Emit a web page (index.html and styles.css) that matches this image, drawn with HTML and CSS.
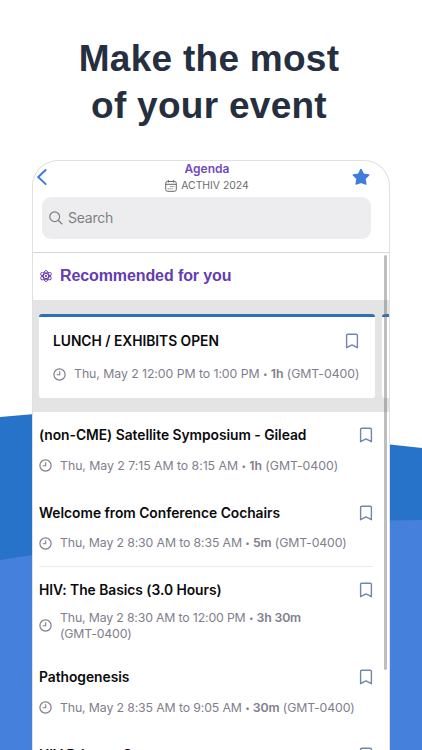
FILE: index.html
```html
<!DOCTYPE html>
<html lang="en">
<head>
  <meta charset="UTF-8">
  <meta name="viewport" content="width=device-width, initial-scale=1.0">
  <title>Agenda</title>
  <link rel="stylesheet" href="styles.css">
</head>
<body>
  <svg class="backdrop" viewBox="0 0 422 750">
    <path d="M0 417 L32 414.3 C160 404 270 424 390 444.5 L422 448 V750 H0 Z" fill="#2673c9"/>
    <path d="M0 560 L32 555 C150 535 270 521 422 520 V750 H0 Z" fill="#4480dc"/>
  </svg>

  <svg class="symbols">
    <symbol id="bookmark" viewBox="0 0 14 16">
      <path d="M2.8 1.2 H11.2 Q12.4 1.2 12.4 2.4 V14.7 L7 11.9 L1.6 14.7 V2.4 Q1.6 1.2 2.8 1.2 Z" fill="none" stroke="#7187a6" stroke-width="1.4" stroke-linejoin="round"/>
    </symbol>
    <symbol id="clock" viewBox="0 0 13 13">
      <circle cx="6.5" cy="6.5" r="5.6" fill="none" stroke="#7f7e8c" stroke-width="1.2"/>
      <path d="M6.7 3.2 V6.7 H3.7" fill="none" stroke="#7f7e8c" stroke-width="1.1"/>
    </symbol>
  </svg>

  <h1 class="headline">Make the most<br>of your event</h1>

  <div class="phone">
    <div class="nav-bar">
      <svg class="back" viewBox="0 0 12 18"><path d="M10.2 1.4 L2.2 9 L10.2 16.6" fill="none" stroke="#3f7ddb" stroke-width="2"/></svg>
      <div class="nav-title">
        <div class="nav-name">Agenda</div>
        <div class="nav-event">
          <svg class="calendar" viewBox="0 0 12 12">
            <rect x="0.7" y="1.5" width="10.6" height="9.8" rx="1.8" fill="none" stroke="#666" stroke-width="1"/>
            <path d="M0.7 4.3 H11.3 M3.3 0 V2.6 M8.7 0 V2.6" stroke="#666" stroke-width="1"/>
            <path d="M5.4 6.5 H9.6 M2.6 8.8 H7.6" stroke="#666" stroke-width="1" stroke-dasharray="1.1 0.9"/>
          </svg>
          <span>ACTHIV 2024</span>
        </div>
      </div>
      <svg class="star" viewBox="0 0 18 18"><path d="M9 1.4 L11.4 6.1 L16.7 6.9 L12.9 10.7 L13.9 16.1 L9 14.3 L4.1 16.1 L5.1 10.7 L1.3 6.9 L6.6 6.1 Z" fill="#3f7ddb" stroke="#3f7ddb" stroke-width="1.4" stroke-linejoin="round"/></svg>
    </div>

    <div class="search">
      <svg class="search-icon" viewBox="0 0 14 14"><circle cx="5.7" cy="5.7" r="4.9" fill="none" stroke="#7f7f84" stroke-width="1.2"/><path d="M9.2 9.2 L13.3 13.3" stroke="#7f7f84" stroke-width="1.3"/></svg>
      <span>Search</span>
    </div>

    <div class="section-head">
      <svg class="atom" viewBox="0 0 12 12" fill="none" stroke="#643cb0" stroke-width="0.9">
        <ellipse cx="6" cy="6" rx="2.6" ry="5.5"/>
        <ellipse cx="6" cy="6" rx="2.6" ry="5.8" transform="rotate(60 6 6)"/>
        <ellipse cx="6" cy="6" rx="2.6" ry="5.8" transform="rotate(120 6 6)"/>
        <circle cx="6" cy="6" r="0.7" fill="#643cb0"/>
      </svg>
      <span>Recommended for you</span>
    </div>

    <div class="carousel">
      <div class="card">
        <div class="row-title"><span>LUNCH / EXHIBITS OPEN</span><svg class="bookmark"><use href="#bookmark"/></svg></div>
        <div class="time"><svg class="clock"><use href="#clock"/></svg><span>Thu, May 2 12:00 PM to 1:00 PM <i>•</i> <b>1h</b> (GMT-0400)</span></div>
      </div>
      <div class="card"></div>
    </div>

    <div class="sessions">
      <div class="session">
        <div class="row-title"><span>(non-CME) Satellite Symposium - Gilead</span><svg class="bookmark"><use href="#bookmark"/></svg></div>
        <div class="time"><svg class="clock"><use href="#clock"/></svg><span>Thu, May 2 7:15 AM to 8:15 AM <i>•</i> <b>1h</b> (GMT-0400)</span></div>
      </div>
      <div class="session lined">
        <div class="row-title"><span>Welcome from Conference Cochairs</span><svg class="bookmark"><use href="#bookmark"/></svg></div>
        <div class="time"><svg class="clock"><use href="#clock"/></svg><span>Thu, May 2 8:30 AM to 8:35 AM <i>•</i> <b>5m</b> (GMT-0400)</span></div>
      </div>
      <div class="session tall">
        <div class="row-title"><span>HIV: The Basics (3.0 Hours)</span><svg class="bookmark"><use href="#bookmark"/></svg></div>
        <div class="time"><svg class="clock"><use href="#clock"/></svg><span>Thu, May 2 8:30 AM to 12:00 PM <i>•</i> <b>3h 30m</b><br>(GMT-0400)</span></div>
      </div>
      <div class="session">
        <div class="row-title"><span>Pathogenesis</span><svg class="bookmark"><use href="#bookmark"/></svg></div>
        <div class="time"><svg class="clock"><use href="#clock"/></svg><span>Thu, May 2 8:35 AM to 9:05 AM <i>•</i> <b>30m</b> (GMT-0400)</span></div>
      </div>
      <div class="session">
        <div class="row-title"><span>HIV Primary Care</span><svg class="bookmark"><use href="#bookmark"/></svg></div>
      </div>
    </div>
    <div class="scrollbar"></div>
  </div>
</body>
</html>
```

FILE: styles.css
```css
* {
  box-sizing: border-box;
}

body {
  position: relative;
  margin: 0;
  height: 750px;
  overflow: hidden;
  background-color: #fff;
  font-family: Inter, "Liberation Sans", sans-serif;
}

svg {
  display: block;
  flex: none;
}

.backdrop {
  position: absolute;
  top: 0;
  left: 0;
  width: 422px;
  height: 750px;
  z-index: -1;
}

.symbols {
  position: absolute;
  width: 0;
  height: 0;
}

.headline {
  margin: 0;
  padding: 35px 4px 0 0;
  height: 160px;
  color: #252f40;
  font-family: "Liberation Sans", Arial, sans-serif;
  font-size: 37px;
  font-weight: bold;
  line-height: 47px;
  letter-spacing: 0.28px;
  text-align: center;
}

.phone {
  position: relative;
  width: 358px;
  height: 590px;
  margin-left: 32px;
  overflow: hidden;
  border: 1px solid #e0e0e2;
  border-bottom: none;
  border-radius: 26px 26px 0 0;
  background-color: #fff;
}

.nav-bar {
  display: flex;
  justify-content: space-between;
  height: 36px;
  padding: 0 19px 0 3px;
}

.back {
  width: 12px;
  height: 18px;
  margin-top: 7px;
}

.nav-title {
  padding-left: 14px;
  text-align: center;
}

.nav-name {
  color: #7149bd;
  font-size: 12px;
  font-weight: 600;
  line-height: 16px;
}

.nav-event {
  display: flex;
  align-items: center;
  gap: 4px;
  color: #6c6c6e;
  font-size: 10.4px;
  line-height: 17px;
}

.calendar {
  width: 12px;
  height: 12px;
}

.star {
  width: 18px;
  height: 18px;
  margin-top: 7px;
}

.search {
  display: flex;
  align-items: center;
  gap: 5px;
  width: 329px;
  height: 42px;
  margin-left: 9px;
  padding: 0 0 1px 7px;
  border-radius: 9px;
  background-color: #ededef;
  color: #7f7f84;
  font-size: 14px;
  letter-spacing: -0.25px;
}

.search-icon {
  width: 14px;
  height: 14px;
}

.section-head {
  display: flex;
  align-items: center;
  gap: 8px;
  height: 48px;
  margin-top: 13px;
  padding: 0 0 1px 7px;
  border-top: 1px solid #d6d6d8;
  color: #643cb0;
  font-family: "Liberation Sans", Arial, sans-serif;
  font-size: 16px;
  font-weight: bold;
  letter-spacing: -0.1px;
}

.atom {
  width: 12px;
  height: 12px;
}

.carousel {
  display: flex;
  gap: 7px;
  height: 112px;
  padding: 14px 0 14px 6px;
  overflow: hidden;
  background-color: #e4e4e4;
}

.card {
  flex: none;
  width: 336px;
  height: 84px;
  padding: 12px 14px 0;
  border-top: 3px solid #2e6fba;
  border-radius: 3px;
  background-color: #fff;
}

.row-title {
  display: flex;
  align-items: center;
  justify-content: space-between;
  height: 24px;
  color: #0b0b0d;
  font-size: 13.8px;
  font-weight: 600;
  letter-spacing: -0.02px;
}

.card .row-title {
  padding-right: 2px;
}

.bookmark {
  width: 14px;
  height: 16px;
}

.time {
  display: flex;
  align-items: center;
  gap: 8px;
  margin-top: 10px;
  color: #7f7e8c;
  font-size: 12.3px;
  line-height: 15.5px;
  letter-spacing: -0.13px;
  white-space: nowrap;
}

.card .time {
  margin-top: 13px;
  letter-spacing: -0.06px;
}

.time b {
  font-weight: 600;
}

.time i {
  font-size: 8px;
  font-style: normal;
  vertical-align: 1px;
}

.clock {
  width: 13px;
  height: 13px;
}

.sessions {
  padding: 0 16px 0 6px;
}

.session {
  height: 77.5px;
  padding-top: 11px;
}

.session .time {
  margin-top: 10.5px;
}

.session:first-child .time {
  letter-spacing: -0.04px;
}

.session.tall {
  height: 87px;
}

.session.tall .time {
  margin-top: 8.4px;
  line-height: 15px;
  letter-spacing: -0.16px;
}

.session.lined {
  border-bottom: 1px solid #ececee;
}

.session:last-child {
  padding-top: 11.8px;
}

/* sits over the list and the carousel */
.scrollbar {
  position: absolute;
  top: 94px;
  right: 2.5px;
  width: 3px;
  height: 415px;
  border-radius: 2px;
  background-color: rgba(110, 110, 112, 0.45);
}
```
